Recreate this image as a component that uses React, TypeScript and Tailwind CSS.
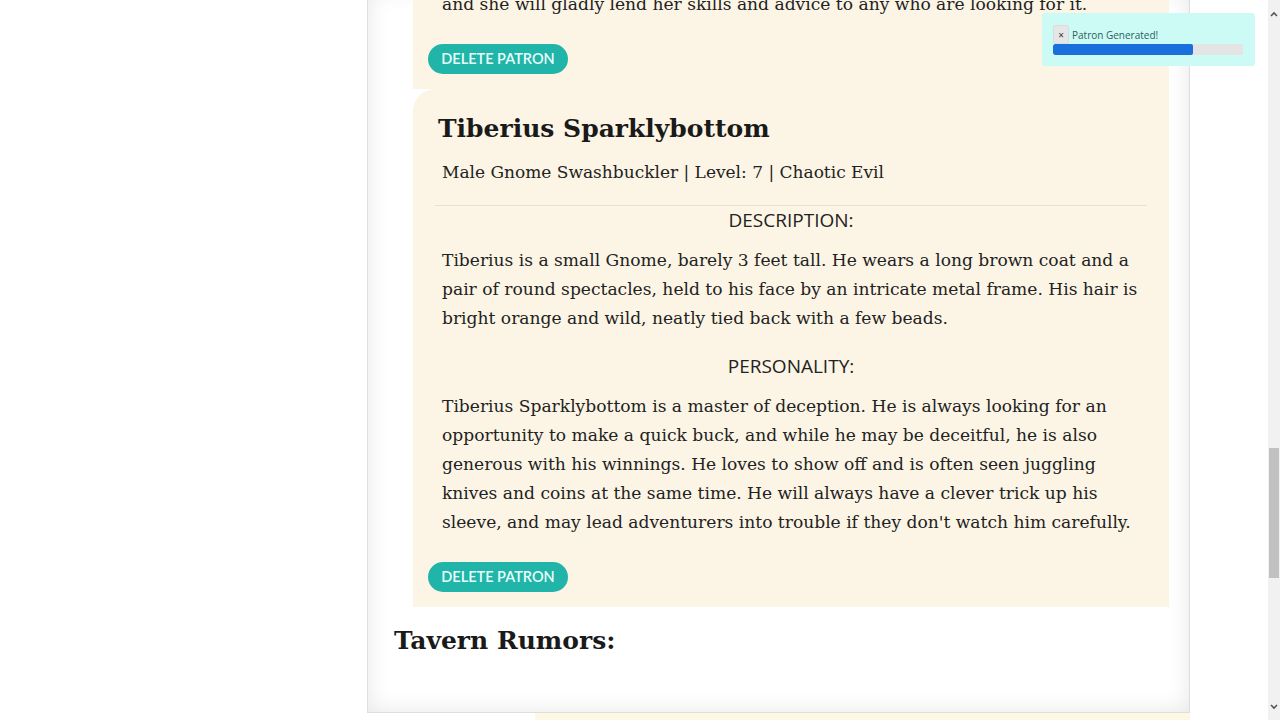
import React from "react";

const serif = { fontFamily: '"DejaVu Serif", "Liberation Serif", serif' };
const sans = { fontFamily: '"Open Sans", "Noto Sans", sans-serif' };
const lato = { fontFamily: 'Lato, "Open Sans", sans-serif' };

function DeleteButton() {
  return (
    <button
      className="ml-[15px] h-[30px] w-[140px] rounded-full bg-[#20b5a8] text-[14.5px] font-semibold text-[#eafffc] flex items-center justify-center"
      style={lato}
    >
      DELETE PATRON
    </button>
  );
}

function Para({ lines }: { lines: string[] }) {
  return (
    <p className="px-[29px] text-[17.1px] leading-[29px] text-[#222] whitespace-nowrap" style={serif}>
      {lines.map((l, i) => (
        <React.Fragment key={i}>
          {l}
          {i < lines.length - 1 && <br />}
        </React.Fragment>
      ))}
    </p>
  );
}

function SectionTitle({ children }: { children: React.ReactNode }) {
  return (
    <div className="text-center text-[19px] leading-[28px] text-[#222]" style={sans}>
      {children}
    </div>
  );
}

export default function App() {
  return (
    <div className="relative flex h-[720px] w-[1280px] overflow-hidden bg-white">
      <div className="relative flex-1 overflow-hidden">
        <div className="ml-[367px] mt-[-11px] w-[823px] border border-[#dedede] bg-white px-[26px] pb-[54px] shadow-[inset_0_0_22px_rgba(0,0,0,0.1)]">
          {/* previous card tail */}
          <div className="ml-[19px] w-[756px] bg-[#fcf5e5] pb-[15px]">
            <Para lines={["and she will gladly lend her skills and advice to any who are looking for it."]} />
            <div className="mt-[25px]">
              <DeleteButton />
            </div>
          </div>

          {/* current card */}
          <div className="ml-[19px] w-[756px] rounded-tl-[22px] bg-[#fcf5e5] pt-[23px] pb-[15px]">
            <h2 className="pl-[25px] text-[25px] font-bold leading-[34px] text-[#1a1a1a]" style={serif}>
              Tiberius Sparklybottom
            </h2>
            <div className="mt-[12px] px-[29px] text-[17px] leading-[29px] text-[#222]" style={serif}>
              Male Gnome Swashbuckler | Level: 7 | Chaotic Evil
            </div>
            <div className="mx-[22px] mt-[18px] border-t border-[#e8e0d0]" />
            <SectionTitle>DESCRIPTION:</SectionTitle>
            <div className="mt-[12px]">
              <Para
                lines={[
                  "Tiberius is a small Gnome, barely 3 feet tall. He wears a long brown coat and a",
                  "pair of round spectacles, held to his face by an intricate metal frame. His hair is",
                  "bright orange and wild, neatly tied back with a few beads.",
                ]}
              />
            </div>
            <div className="mt-[19px]">
              <SectionTitle>PERSONALITY:</SectionTitle>
            </div>
            <div className="mt-[12px]">
              <Para
                lines={[
                  "Tiberius Sparklybottom is a master of deception. He is always looking for an",
                  "opportunity to make a quick buck, and while he may be deceitful, he is also",
                  "generous with his winnings. He loves to show off and is often seen juggling",
                  "knives and coins at the same time. He will always have a clever trick up his",
                  "sleeve, and may lead adventurers into trouble if they don't watch him carefully.",
                ]}
              />
            </div>
            <div className="mt-[25px]">
              <DeleteButton />
            </div>
          </div>

          <h2 className="mt-[17px] text-[25px] font-bold leading-[34px] text-[#1a1a1a]" style={serif}>
            Tavern Rumors:
          </h2>
        </div>
        <div className="ml-[535px] h-[20px] w-[655px] bg-[#fbf8e4]" />
      </div>

      {/* scrollbar */}
      <div className="relative flex w-[12px] flex-col bg-[#f1f1f1]">
        <div className="flex h-[17px] items-end justify-center">
          <svg width="8" height="6" viewBox="0 0 8 6">
            <path d="M1 5 L4 2 L7 5" fill="none" stroke="#555" strokeWidth="1.6" />
          </svg>
        </div>
        <div className="mt-[431px] h-[130px] w-[10px] self-center bg-[#c1c1c1]" />
        <div className="flex-1" />
        <div className="flex h-[16px] items-start justify-center">
          <svg width="8" height="6" viewBox="0 0 8 6">
            <path d="M1 1 L4 4 L7 1" fill="none" stroke="#555" strokeWidth="1.6" />
          </svg>
        </div>
      </div>

      {/* toast */}
      <div className="absolute left-[1042px] top-[13px] h-[53px] w-[213px] rounded-[3px] bg-[#ccfaf5] px-[11px] pt-[12px]">
        <div className="flex h-[19px] items-center">
          <div className="flex h-[19px] w-[16px] items-center justify-center rounded-[2px] border border-[#dcdcdc] bg-[#e6e6e6] text-[10px] leading-none text-[#333]" style={sans}>
            ×
          </div>
          <span className="ml-[3px] mt-[2px] text-[10px] text-[#2c5f5b]" style={sans}>
            Patron Generated!
          </span>
        </div>
        <div className="h-[11px] w-[190px] overflow-hidden rounded-[2px] bg-[#e4e4e4]">
          <div className="h-full w-[140px] rounded-[2px] bg-[#1a6fde]" />
        </div>
      </div>
    </div>
  );
}
